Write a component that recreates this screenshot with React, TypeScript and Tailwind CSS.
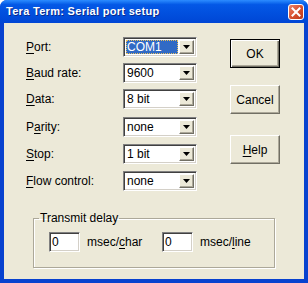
import type { ReactNode } from "react";

const font = { fontFamily: '"Liberation Sans", Arial, sans-serif' };

function U({ children }: { children: ReactNode }) {
    return <span className="underline underline-offset-[2px] decoration-[1px]">{children}</span>;
}

function Combo({ value, focused, className }: { value: string; focused?: boolean; className?: string }) {
    return (
        <div
            className={
                "flex h-[20px] w-[74px] border border-t-[#808080] border-l-[#808080] border-b-white border-r-white bg-white shadow-[inset_1px_1px_0_#404040,inset_-1px_-1px_0_#D4D0C8] p-[2px] " +
                (className ?? "")
            }
        >
            <div
                className={
                    "flex-1 flex items-center pl-[1px] text-[12px] leading-none " +
                    (focused ? "bg-[#316AC5] text-white outline-1 outline-dotted outline-[#E8C060] -outline-offset-1" : "text-black")
                }
            >
                {value}
            </div>
            <div className="w-[15px] h-full ml-[1px] flex items-center justify-center bg-[#ECE9D8] border border-t-white border-l-white border-b-[#716F64] border-r-[#716F64] shadow-[inset_-1px_-1px_0_#ACA899]">
                <svg width="7" height="4" viewBox="0 0 7 4">
                    <path d="M0 0h7L3.5 4z" fill="#000" />
                </svg>
            </div>
        </div>
    );
}

function Button({ children, isDefault, className }: { children: ReactNode; isDefault?: boolean; className?: string }) {
    return (
        <div
            className={
                "w-[50px] h-[29px] flex items-center justify-center text-[12px] text-black bg-[#ECE9D8] " +
                (isDefault
                    ? "border border-black shadow-[inset_1px_1px_0_#fff,inset_-1px_-1px_0_#716F64,inset_-2px_-2px_0_#ACA899] "
                    : "border border-t-white border-l-white border-b-[#716F64] border-r-[#716F64] shadow-[inset_-1px_-1px_0_#ACA899] ") +
                (className ?? "")
            }
        >
            {children}
        </div>
    );
}

function Field({ value }: { value: string }) {
    return (
        <div className="w-[31px] h-[20px] flex items-center pl-[2px] text-[12px] bg-white border border-t-[#808080] border-l-[#808080] border-b-white border-r-white shadow-[inset_1px_1px_0_#404040,inset_-1px_-1px_0_#D4D0C8]">
            {value}
        </div>
    );
}

const rows: { label: ReactNode; value: string; mt: string; focused?: boolean }[] = [
    { label: <><U>P</U>ort:</>, value: "COM1", mt: "mt-0", focused: true },
    { label: <><U>B</U>aud rate:</>, value: "9600", mt: "mt-[6px]" },
    { label: <><U>D</U>ata:</>, value: "8 bit", mt: "mt-[6px]" },
    { label: <>P<U>a</U>rity:</>, value: "none", mt: "mt-[8px]" },
    { label: <><U>S</U>top:</>, value: "1 bit", mt: "mt-[7px]" },
    { label: <><U>F</U>low control:</>, value: "none", mt: "mt-[7px]" },
];

export default function App() {
    return (
        <div className="w-[308px] h-[283px] flex flex-col bg-[#0842CF] rounded-t-[7px] overflow-hidden" style={font}>
            <div className="h-[23px] flex items-center pl-[6px] pr-[4px] bg-gradient-to-b from-[#2C8CFF] via-[#0458E6] via-20% to-[#0046D5]">
                <span className="flex-1 text-white font-bold text-[11px] tracking-[0.3px] [text-shadow:1px_1px_0_#0A2A8A]">
                    Tera Term: Serial port setup
                </span>
                <div className="w-[16px] h-[16px] rounded-[3px] border border-white bg-gradient-to-br from-[#E8826A] via-[#D9502E] to-[#B83A1C] flex items-center justify-center">
                    <svg width="10" height="10" viewBox="0 0 10 10">
                        <path d="M1.5 1.5L8.5 8.5M8.5 1.5L1.5 8.5" stroke="#fff" strokeWidth="2" strokeLinecap="square" />
                    </svg>
                </div>
            </div>
            <div className="flex-1 mx-[4px] mb-[4px] bg-[#ECE9D8] flex flex-col">
                <div className="flex h-[168px] pt-[14px]">
                    <div className="flex flex-col pl-[22px] w-[197px]">
                        {rows.map((r, i) => (
                            <div key={i} className={"flex items-center " + r.mt}>
                                <span className="w-[97px] text-[12px] text-black">{r.label}</span>
                                <Combo value={r.value} focused={r.focused} />
                            </div>
                        ))}
                    </div>
                    <div className="flex flex-col pl-[29px] pt-[2px]">
                        <Button isDefault>OK</Button>
                        <Button className="mt-[17px]">Cancel</Button>
                        <Button className="mt-[21px]"><U>H</U>elp</Button>
                    </div>
                </div>
                <fieldset className="mt-[20px] ml-[29px] w-[242px] h-[57px] border border-[#ACA899] shadow-[1px_1px_0_#fff,inset_1px_1px_0_#fff]">
                    <legend className="ml-[5px] px-[1px] text-[12px] leading-[14px] text-black">Transmit delay</legend>
                    <div className="flex items-center mt-[7px] pl-[15px] text-[12px] text-black">
                        <Field value="0" />
                        <span className="ml-[7px] w-[75px]">msec/<U>c</U>har</span>
                        <Field value="0" />
                        <span className="ml-[7px]">msec/<U>l</U>ine</span>
                    </div>
                </fieldset>
            </div>
        </div>
    );
}
